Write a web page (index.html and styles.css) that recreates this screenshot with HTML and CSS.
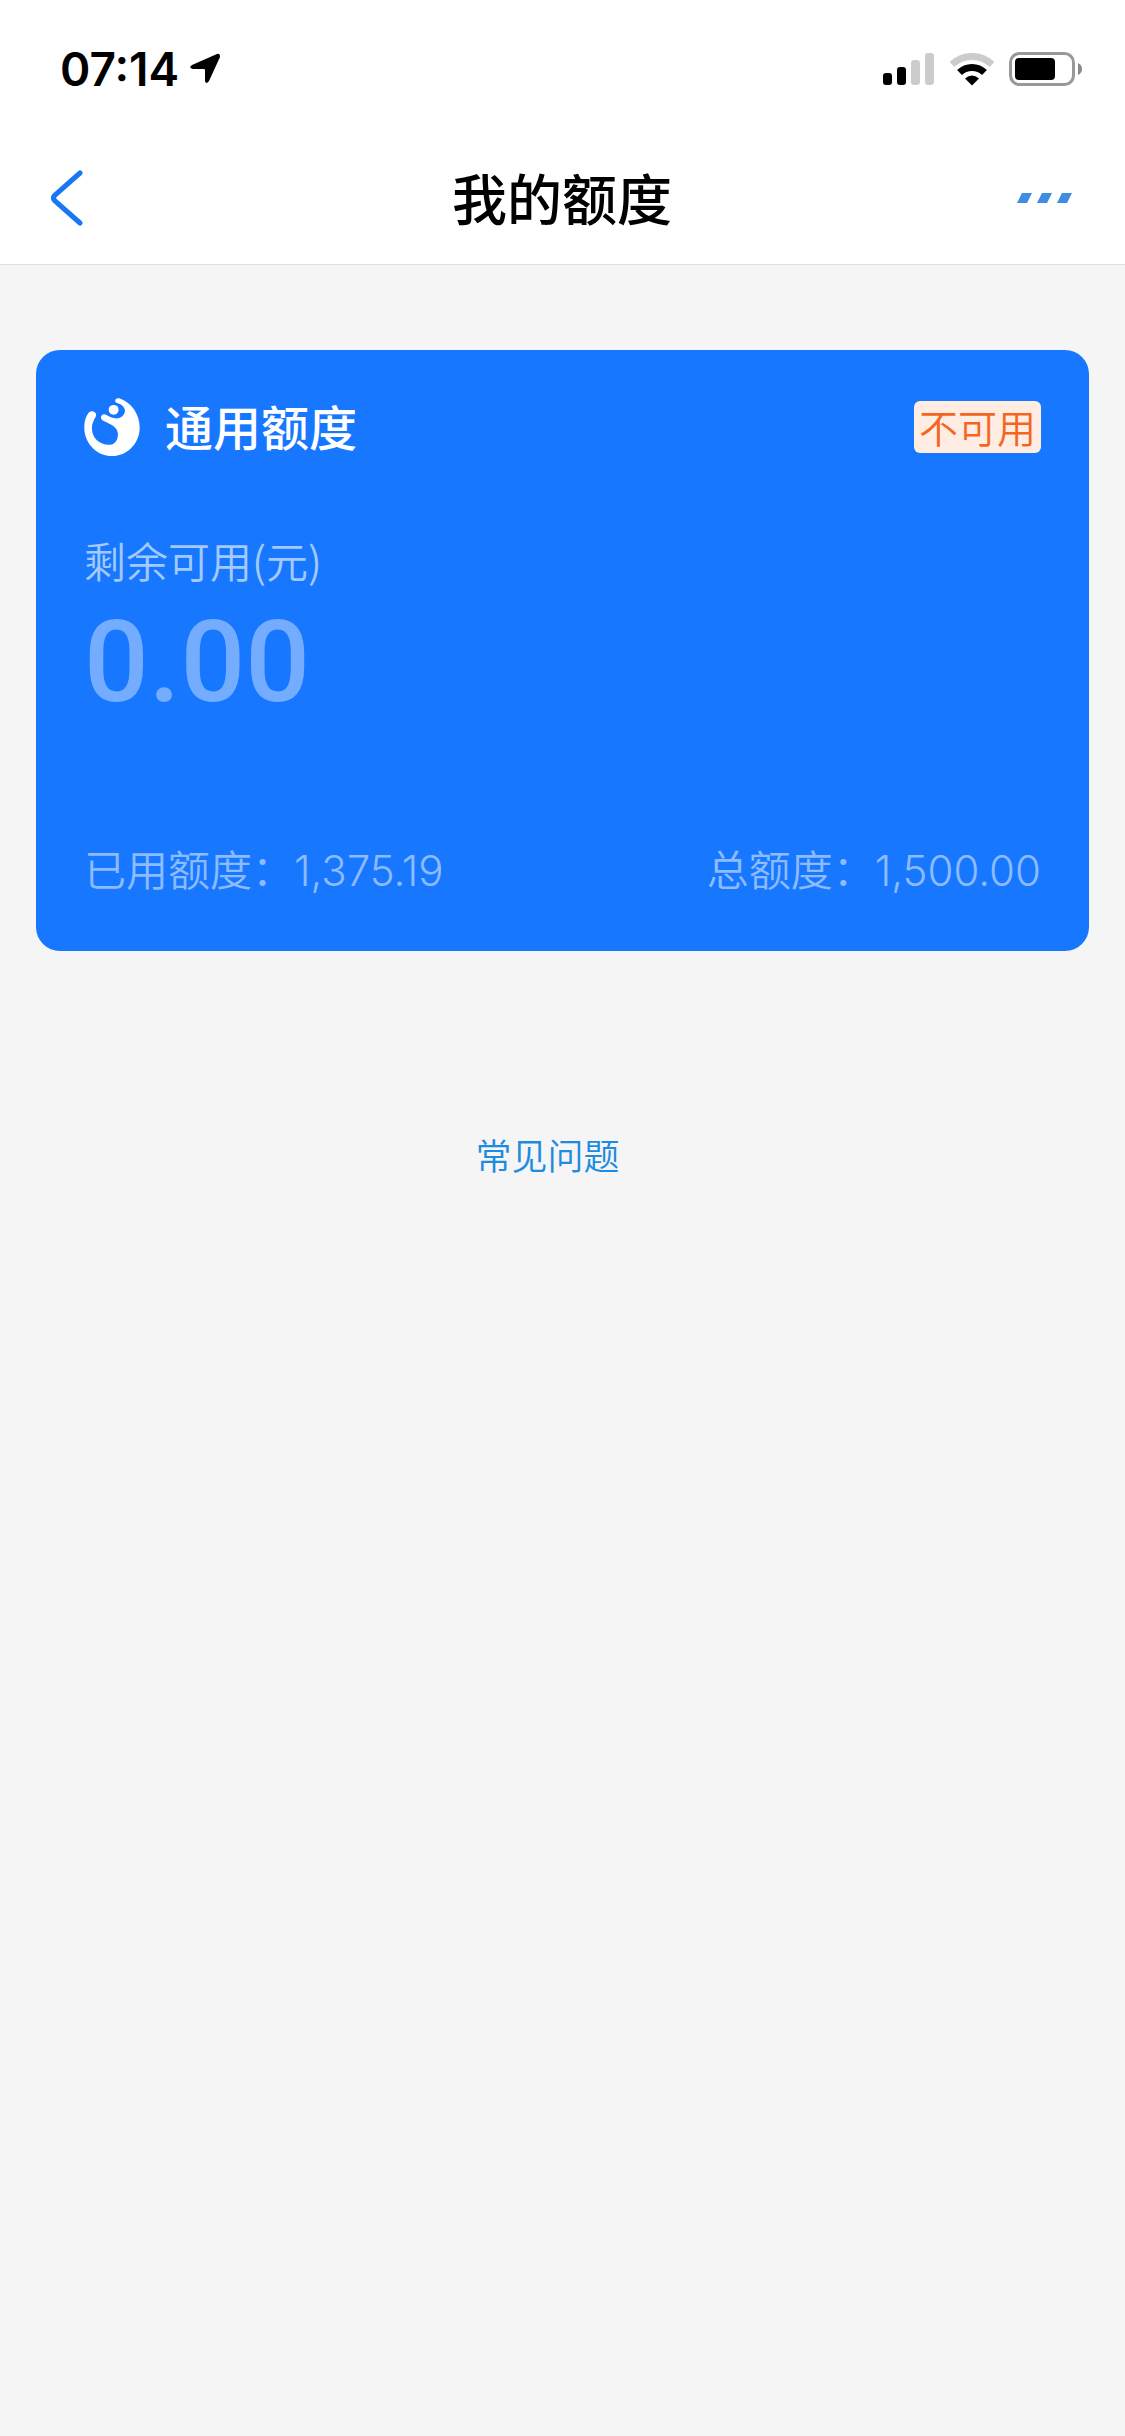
FILE: index.html
```
<!DOCTYPE html>
<html lang="zh-CN">
<head>
    <meta charset="UTF-8">
    <meta name="viewport" content="width=device-width, initial-scale=1.0">
    <title>我的额度</title>
    <link rel="stylesheet" href="styles.css">
</head>
<body>
    <div class="status-bar">
        <div class="status-left">
            <span class="time">07:14</span>
            <svg width="32" height="32" viewBox="0 0 32 32">
                <path d="M3 12 L28 1 Q31 0 31 4 L20 28 Q17 32 16 28 V17 Q16 16 15 16 H4 Q-1 15 3 12 Z"/>
            </svg>
        </div>
        <div class="status-right">
            <svg width="52" height="34" viewBox="0 0 52 34">
                <rect x="0" y="21" width="9" height="12" rx="3"/>
                <rect x="14" y="15" width="9" height="18" rx="3"/>
                <rect x="28" y="8" width="9" height="25" rx="3" fill="#cccccc"/>
                <rect x="42" y="1" width="9" height="32" rx="3" fill="#cccccc"/>
            </svg>
            <svg width="46" height="34" viewBox="0 0 46 34">
                <path d="M3 12.5 A29 29 0 0 1 43 12.5" fill="none" stroke="#cccccc" stroke-width="7"/>
                <path d="M10.5 20.5 A18 18 0 0 1 35.5 20.5" fill="none" stroke="#000" stroke-width="7"/>
                <path d="M16 26.5 Q23 20.5 30 26.5 L23 33.5 Z"/>
            </svg>
            <svg width="74" height="34" viewBox="0 0 74 34">
                <rect x="1.5" y="1.5" width="63" height="31" rx="9" fill="none" stroke="#999999" stroke-width="3"/>
                <rect x="6" y="6" width="40" height="22" rx="4"/>
                <path d="M69 11 Q73 13 73 17 Q73 21 69 23 Z" fill="#888888"/>
            </svg>
        </div>
    </div>

    <header class="nav">
        <button class="nav-button" type="button" aria-label="返回">
            <svg width="32" height="58" viewBox="0 0 32 58">
                <path d="M29 4 L4 26 Q1 29 4 32 L29 54" fill="none" stroke="#1877f2" stroke-width="5" stroke-linecap="round"/>
            </svg>
        </button>
        <h1 class="nav-title">我的额度</h1>
        <button class="nav-button nav-more" type="button" aria-label="更多">
            <svg width="56" height="10" viewBox="0 0 56 10" fill="#3f8de0">
                <path d="M5 0 H15 L10 10 H0 Z"/>
                <path d="M25 0 H35 L30 10 H20 Z"/>
                <path d="M45 0 H55 L50 10 H40 Z"/>
            </svg>
        </button>
    </header>

    <main class="content">
        <section class="card">
            <div class="card-head">
                <svg width="56" height="58" viewBox="0 0 168 176" fill="#fff">
                    <path d="M106 1 C144 14 168 50 168 90 C168 138 130 176 84 176 C38 176 0 138 0 90 C0 70 4 58 12 46 C22 34 40 44 35 56 C28 68 23 78 23 92 C23 122 46 142 74 142 C92 142 103 128 102 108 C101 86 76 78 56 68 C44 60 54 44 66 51 C76 57 92 65 106 61 C122 55 127 40 121 30 C116 21 107 17 99 15 C89 11 94 -2 106 1 Z"/>
                    <circle cx="89" cy="36" r="15"/>
                </svg>
                <h2 class="card-title">通用额度</h2>
                <span class="badge">不可用</span>
            </div>
            <div class="label">剩余可用(元)</div>
            <div class="amount">0.00</div>
            <div class="card-foot">
                <span>已用额度：<span class="num">1,375.19</span></span>
                <span>总额度：<span class="num">1,500.00</span></span>
            </div>
        </section>
        <div class="faq">
            <a class="faq-link" href="#">常见问题</a>
        </div>
    </main>
</body>
</html>
```
FILE: styles.css
```
body {
    margin: 0;
    min-height: 100vh;
    background-color: #f5f5f5;
    color: #000;
    font-family: "Noto Sans CJK SC", sans-serif;
}
svg {
    display: block;
    flex-shrink: 0;
}

/* status bar */
.status-bar {
    display: flex;
    justify-content: space-between;
    align-items: center;
    box-sizing: border-box;
    height: 132px;
    padding: 6px 42px 0 60px;
    background-color: #fff;
}
.status-left {
    display: flex;
    align-items: center;
    gap: 10px;
}
.time {
    font-family: Inter, sans-serif;
    font-size: 46px;
    font-weight: 600;
    line-height: 52px;
}
.status-right {
    display: flex;
    align-items: center;
    gap: 14px;
}

/* navigation */
.nav {
    display: grid;
    grid-template-columns: 1fr auto 1fr;
    align-items: center;
    height: 132px;
    padding: 0 52px 0 51px;
    background-color: #fff;
    border-bottom: 1px solid #dddddd;
}
.nav-button {
    justify-self: start;
    padding: 0;
    border: none;
    background: none;
    cursor: pointer;
}
.nav-more {
    justify-self: end;
}
.nav-title {
    margin: 0;
    padding-bottom: 4px;
    font-size: 55px;
    font-weight: 500;
    line-height: 72px;
}

/* card */
.content {
    padding: 85px 36px 0;
}
.card {
    padding: 48px 48px 50px;
    border-radius: 24px;
    background-color: #1877ff;
    color: #fff;
}
.card-head {
    display: flex;
    align-items: center;
    height: 58px;
}
.card-title {
    flex: 1;
    margin: 0 0 0 25px;
    padding-bottom: 4px;
    font-size: 48px;
    font-weight: 500;
    line-height: 58px;
}
.badge {
    padding: 0 5px 2px;
    border-radius: 6px;
    background-color: #ffece2;
    color: #f4651e;
    font-size: 39px;
    font-weight: 350;
    line-height: 50px;
}
.label {
    margin-top: 74px;
    color: #a3c9ff;
    font-size: 42px;
    font-weight: 350;
    line-height: 60px;
}
.amount {
    margin-top: 12px;
    color: #74adff;
    font-family: Roboto, sans-serif;
    font-size: 114px;
    font-weight: 500;
    line-height: 120px;
}
.card-foot {
    display: flex;
    justify-content: space-between;
    margin-top: 116px;
    color: #8cbbff;
    font-size: 42px;
    font-weight: 350;
    line-height: 60px;
}
.num {
    font-family: Inter, sans-serif;
}

.faq {
    padding: 178px 30px 0 0;
    text-align: center;
}
.faq-link {
    color: #1c8be0;
    font-size: 36px;
    font-weight: 350;
    line-height: 50px;
    text-decoration: none;
}
```
